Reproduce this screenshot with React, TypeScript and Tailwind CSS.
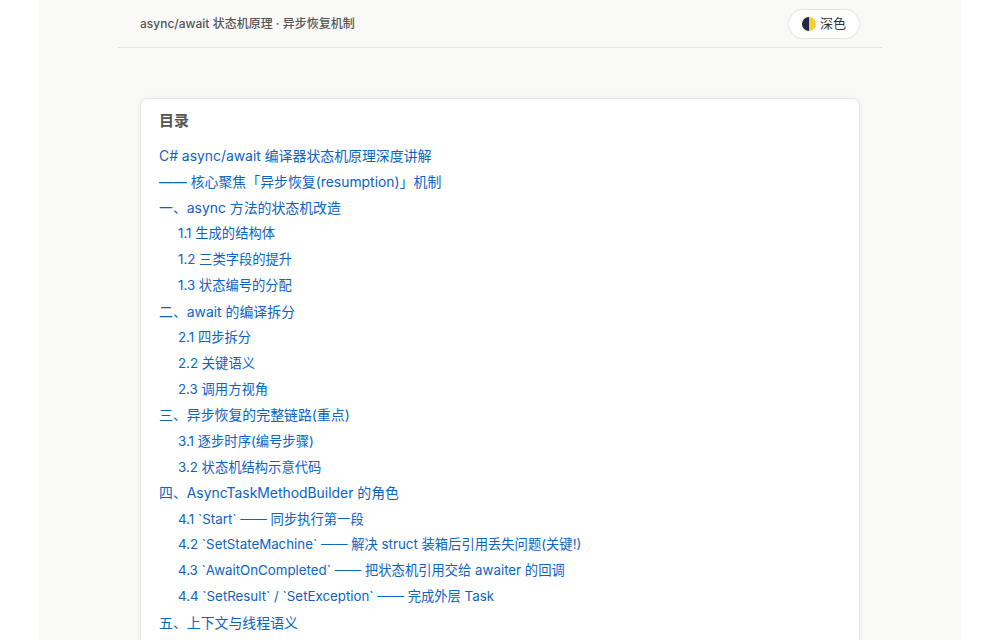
const items: [number, string][] = [
  [0, "C# async/await 编译器状态机原理深度讲解"],
  [0, "—— 核心聚焦「异步恢复(resumption)」机制"],
  [0, "一、async 方法的状态机改造"],
  [1, "1.1 生成的结构体"],
  [1, "1.2 三类字段的提升"],
  [1, "1.3 状态编号的分配"],
  [0, "二、await 的编译拆分"],
  [1, "2.1 四步拆分"],
  [1, "2.2 关键语义"],
  [1, "2.3 调用方视角"],
  [0, "三、异步恢复的完整链路(重点)"],
  [1, "3.1 逐步时序(编号步骤)"],
  [1, "3.2 状态机结构示意代码"],
  [0, "四、AsyncTaskMethodBuilder 的角色"],
  [1, "4.1 `Start` —— 同步执行第一段"],
  [1, "4.2 `SetStateMachine` —— 解决 struct 装箱后引用丢失问题(关键!)"],
  [1, "4.3 `AwaitOnCompleted` —— 把状态机引用交给 awaiter 的回调"],
  [1, "4.4 `SetResult` / `SetException` —— 完成外层 Task"],
  [0, "五、上下文与线程语义"],
  [1, "5.1 SynchronizationContext"],
];
export default function App() {
  return (
    <div className="w-[1000px] h-[640px] overflow-hidden bg-white" style={{ fontFamily: '"Helvetica Neue", Inter, "Noto Sans CJK SC", sans-serif' }}>
      <div className="mx-[38px] h-full bg-[#f9f9f8] px-[80px]">
        <div className="h-[48px] flex items-center justify-between border-b border-[#e3e3e3] pl-[22px] pr-[22px]">
          <span className="text-[12px] font-medium text-[#555]">async/await 状态机原理 · 异步恢复机制</span>
          <button className="h-[30px] px-[13px] rounded-full bg-white border border-[#e3e3e3] flex items-center gap-[4px] text-[13px] text-[#333]">
            <svg width="14" height="14" viewBox="0 0 14 14"><circle cx="7" cy="7" r="7" fill="#f5cf35"/><path d="M7 0 A7 7 0 0 0 7 14 Z" fill="#1e2a4a"/></svg>
            深色
          </button>
        </div>
        <div className="mt-[50px] mx-[22px] bg-white rounded-[8px] border border-[#e6e6e6] shadow-[0_1px_4px_rgba(0,0,0,0.08)] px-[18px] pt-[11px] h-[700px]">
          <div className="text-[15px] font-semibold text-[#555] mb-[10px]">目录</div>
          {items.map(([l, t], i) => (
            <div key={i} className={`text-[#0b63c5] whitespace-nowrap ${l ? "pl-[19px] text-[13.3px] h-[25.8px] leading-[25.8px]" : "text-[13.9px] h-[26.3px] leading-[26.3px]"}`}>{t}</div>
          ))}
        </div>
      </div>
    </div>
  );
}
